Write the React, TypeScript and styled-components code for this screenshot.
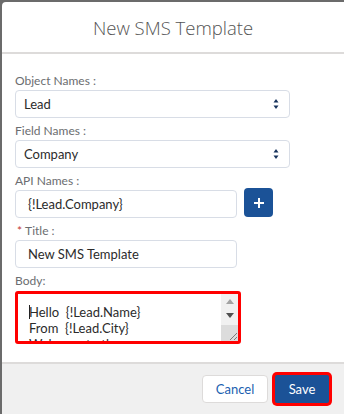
import React from "react";
import styled, { createGlobalStyle } from "styled-components";

const Global = createGlobalStyle`
  html, body { margin: 0; padding: 0; background: #6b6b6b; }
  body { font-family: Lato, "Open Sans", sans-serif; }
  * { box-sizing: border-box; }
`;

const Modal = styled.div`
  margin: 2px 0 0 2px;
  height: 412px;
  background: #fff;
  border-top-left-radius: 4px;
  display: flex;
  flex-direction: column;
`;

const Header = styled.div`
  height: 52px;
  border-bottom: 2px solid #dddbda;
  display: flex;
  align-items: center;
  justify-content: center;
`;

const Title = styled.h2`
  margin: 0;
  font-family: "Open Sans", sans-serif;
  font-weight: 300;
  font-size: 18.5px;
  color: #555;
`;

const Body = styled.div`
  flex: 1;
  padding: 18px 0 0 13px;
  display: flex;
  flex-direction: column;
  gap: 4px;
`;

const Group = styled.div`
  display: flex;
  flex-direction: column;
`;

const Label = styled.label`
  font-size: 12px;
  line-height: 18px;
  color: #6b6d70;
`;

const Req = styled.span`
  color: #c23934;
  margin: 0 3px 0 2px;
`;

const Box = styled.div<{ $w: number; $pad?: number }>`
  width: ${(p) => p.$w}px;
  height: 28px;
  border: 1px solid #d8dde6;
  border-radius: 4px;
  background: #fff;
  display: flex;
  align-items: center;
  padding: 0 10px 0 ${(p) => p.$pad ?? 8}px;
  font-size: 13px;
  color: #16325c;
`;

const BoxText = styled.span`
  flex: 1;
  color: #2b2b2b;
`;

const Arrows = styled.svg`
  width: 6px;
  height: 12px;
`;

const Row = styled.div`
  display: flex;
  align-items: flex-start;
  gap: 7px;
`;

const PlusButton = styled.button`
  width: 29px;
  height: 29px;
  margin-top: -2px;
  border: none;
  border-radius: 4px;
  background: #1b5297;
  display: flex;
  align-items: center;
  justify-content: center;
  padding: 0;
`;

const AreaBox = styled.div`
  width: 226px;
  height: 53px;
  border: 3px solid #ff0000;
  border-radius: 3px;
  display: flex;
  margin-top: 1px;
  overflow: hidden;
`;

const AreaText = styled.div`
  flex: 1;
  padding: 10px 0 0 11px;
  font-size: 13px;
  line-height: 16px;
  color: #2b2b2b;
  white-space: pre;
  overflow: hidden;
`;

const Caret = styled.span`
  display: inline-block;
  width: 1px;
  height: 14px;
  background: #222;
  vertical-align: -2px;
  margin-right: -1px;
`;

const Scroll = styled.div`
  width: 17px;
  background: #f1f1f1;
  display: flex;
  flex-direction: column;
  align-items: center;
`;

const ScrollBtn = styled.div`
  height: 14px;
  width: 100%;
  display: flex;
  align-items: center;
  justify-content: center;
`;

const Grip = styled.div`
  margin-top: auto;
  width: 100%;
  height: 16px;
  background: #dcdcdc;
  display: flex;
  align-items: flex-end;
  justify-content: flex-end;
`;

const Footer = styled.div`
  height: 52px;
  border-top: 2px solid #dddbda;
  background: #f0f0f0;
  display: flex;
  align-items: center;
  justify-content: flex-end;
  padding-right: 15px;
  gap: 7px;
`;

const CancelButton = styled.button`
  width: 66px;
  height: 28px;
  border: 1px solid #dddbda;
  border-radius: 4px;
  background: #fff;
  color: #1b5fb0;
  font-family: Lato, sans-serif;
  font-size: 13px;
  padding: 0;
`;

const SaveButton = styled.button`
  width: 54px;
  height: 28px;
  border: none;
  border-radius: 2px;
  background: #1b5297;
  color: #fff;
  font-family: Lato, sans-serif;
  font-size: 13px;
  padding: 0;
  box-shadow: 0 0 0 3px #ff0000;
`;

const SelectArrows = () => (
  <Arrows viewBox="0 0 6 12">
    <path d="M3 1 L5.5 4.5 H0.5 Z" fill="#16325c" />
    <path d="M3 11 L5.5 7.5 H0.5 Z" fill="#16325c" />
  </Arrows>
);

export default function App() {
  return (
    <>
      <Global />
      <Modal>
        <Header>
          <Title>New SMS Template</Title>
        </Header>
        <Body>
          <Group>
            <Label>Object Names :</Label>
            <Box $w={275}>
              <BoxText>Lead</BoxText>
              <SelectArrows />
            </Box>
          </Group>
          <Group>
            <Label>Field Names :</Label>
            <Box $w={275}>
              <BoxText>Company</BoxText>
              <SelectArrows />
            </Box>
          </Group>
          <Group>
            <Label>API Names :</Label>
            <Row>
              <Box $w={222} $pad={12}>
                <BoxText>{"{!Lead.Company}"}</BoxText>
              </Box>
              <PlusButton aria-label="Add">
                <svg width="12" height="12" viewBox="0 0 12 12">
                  <path d="M6 1 V11 M1 6 H11" stroke="#fff" strokeWidth="2" />
                </svg>
              </PlusButton>
            </Row>
          </Group>
          <Group>
            <Label>
              <Req>*</Req>Title :
            </Label>
            <Box $w={222} $pad={12}>
              <BoxText>New SMS Template</BoxText>
            </Box>
          </Group>
          <Group>
            <Label>Body:</Label>
            <AreaBox>
              <AreaText>
                <Caret />
                {"Hello  {!Lead.Name}\nFrom  {!Lead.City}\nWelcome to the"}
              </AreaText>
              <Scroll>
                <ScrollBtn>
                  <svg width="8" height="5" viewBox="0 0 8 5">
                    <path d="M4 0 L8 5 H0 Z" fill="#a3a3a3" />
                  </svg>
                </ScrollBtn>
                <ScrollBtn>
                  <svg width="8" height="5" viewBox="0 0 8 5">
                    <path d="M4 5 L8 0 H0 Z" fill="#505050" />
                  </svg>
                </ScrollBtn>
                <Grip>
                  <svg width="10" height="10" viewBox="0 0 10 10">
                    <path d="M9 2 L2 9 M9 6 L6 9" stroke="#7a7a7a" strokeWidth="1" />
                  </svg>
                </Grip>
              </Scroll>
            </AreaBox>
          </Group>
        </Body>
        <Footer>
          <CancelButton>Cancel</CancelButton>
          <SaveButton>Save</SaveButton>
        </Footer>
      </Modal>
    </>
  );
}
